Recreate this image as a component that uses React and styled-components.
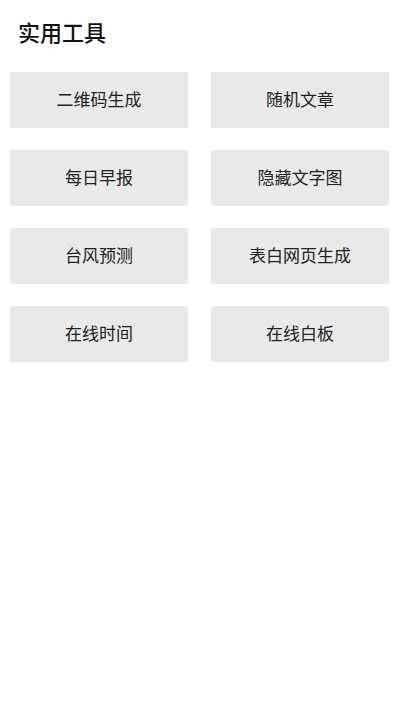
import React from 'react';
import styled, { createGlobalStyle } from 'styled-components';

const GlobalStyle = createGlobalStyle`
  html, body {
    margin: 0;
    padding: 0;
    background: #ffffff;
  }
  body {
    font-family: "Noto Sans CJK SC", "Noto Sans", sans-serif;
  }
`;

const Page = styled.div`
  display: flex;
  flex-direction: column;
  min-height: 711px;
  background: #ffffff;
`;

const Title = styled.h1`
  margin: 0;
  padding: 15px 18px 0 18px;
  height: 56px;
  box-sizing: border-box;
  font-size: 22px;
  line-height: 32px;
  font-weight: 500;
  color: #111;
`;

const ToolGrid = styled.div`
  display: grid;
  grid-template-columns: 1fr 1fr;
  column-gap: 23px;
  row-gap: 22px;
  padding: 16px 11px 0 10px;
`;

const ToolButton = styled.div`
  display: flex;
  align-items: center;
  justify-content: center;
  box-sizing: border-box;
  height: 56px;
  padding-bottom: 3px;
  background: #e9e9e9;
  border-radius: 2px;
  font-size: 17px;
  color: #222;
`;

const tools = ['二维码生成', '随机文章', '每日早报', '隐藏文字图', '台风预测', '表白网页生成', '在线时间', '在线白板'];

const App = () => (
  <Page>
    <GlobalStyle />
    <Title>实用工具</Title>
    <ToolGrid>
      {tools.map((name) => (
        <ToolButton key={name}>{name}</ToolButton>
      ))}
    </ToolGrid>
  </Page>
);

export default App;
